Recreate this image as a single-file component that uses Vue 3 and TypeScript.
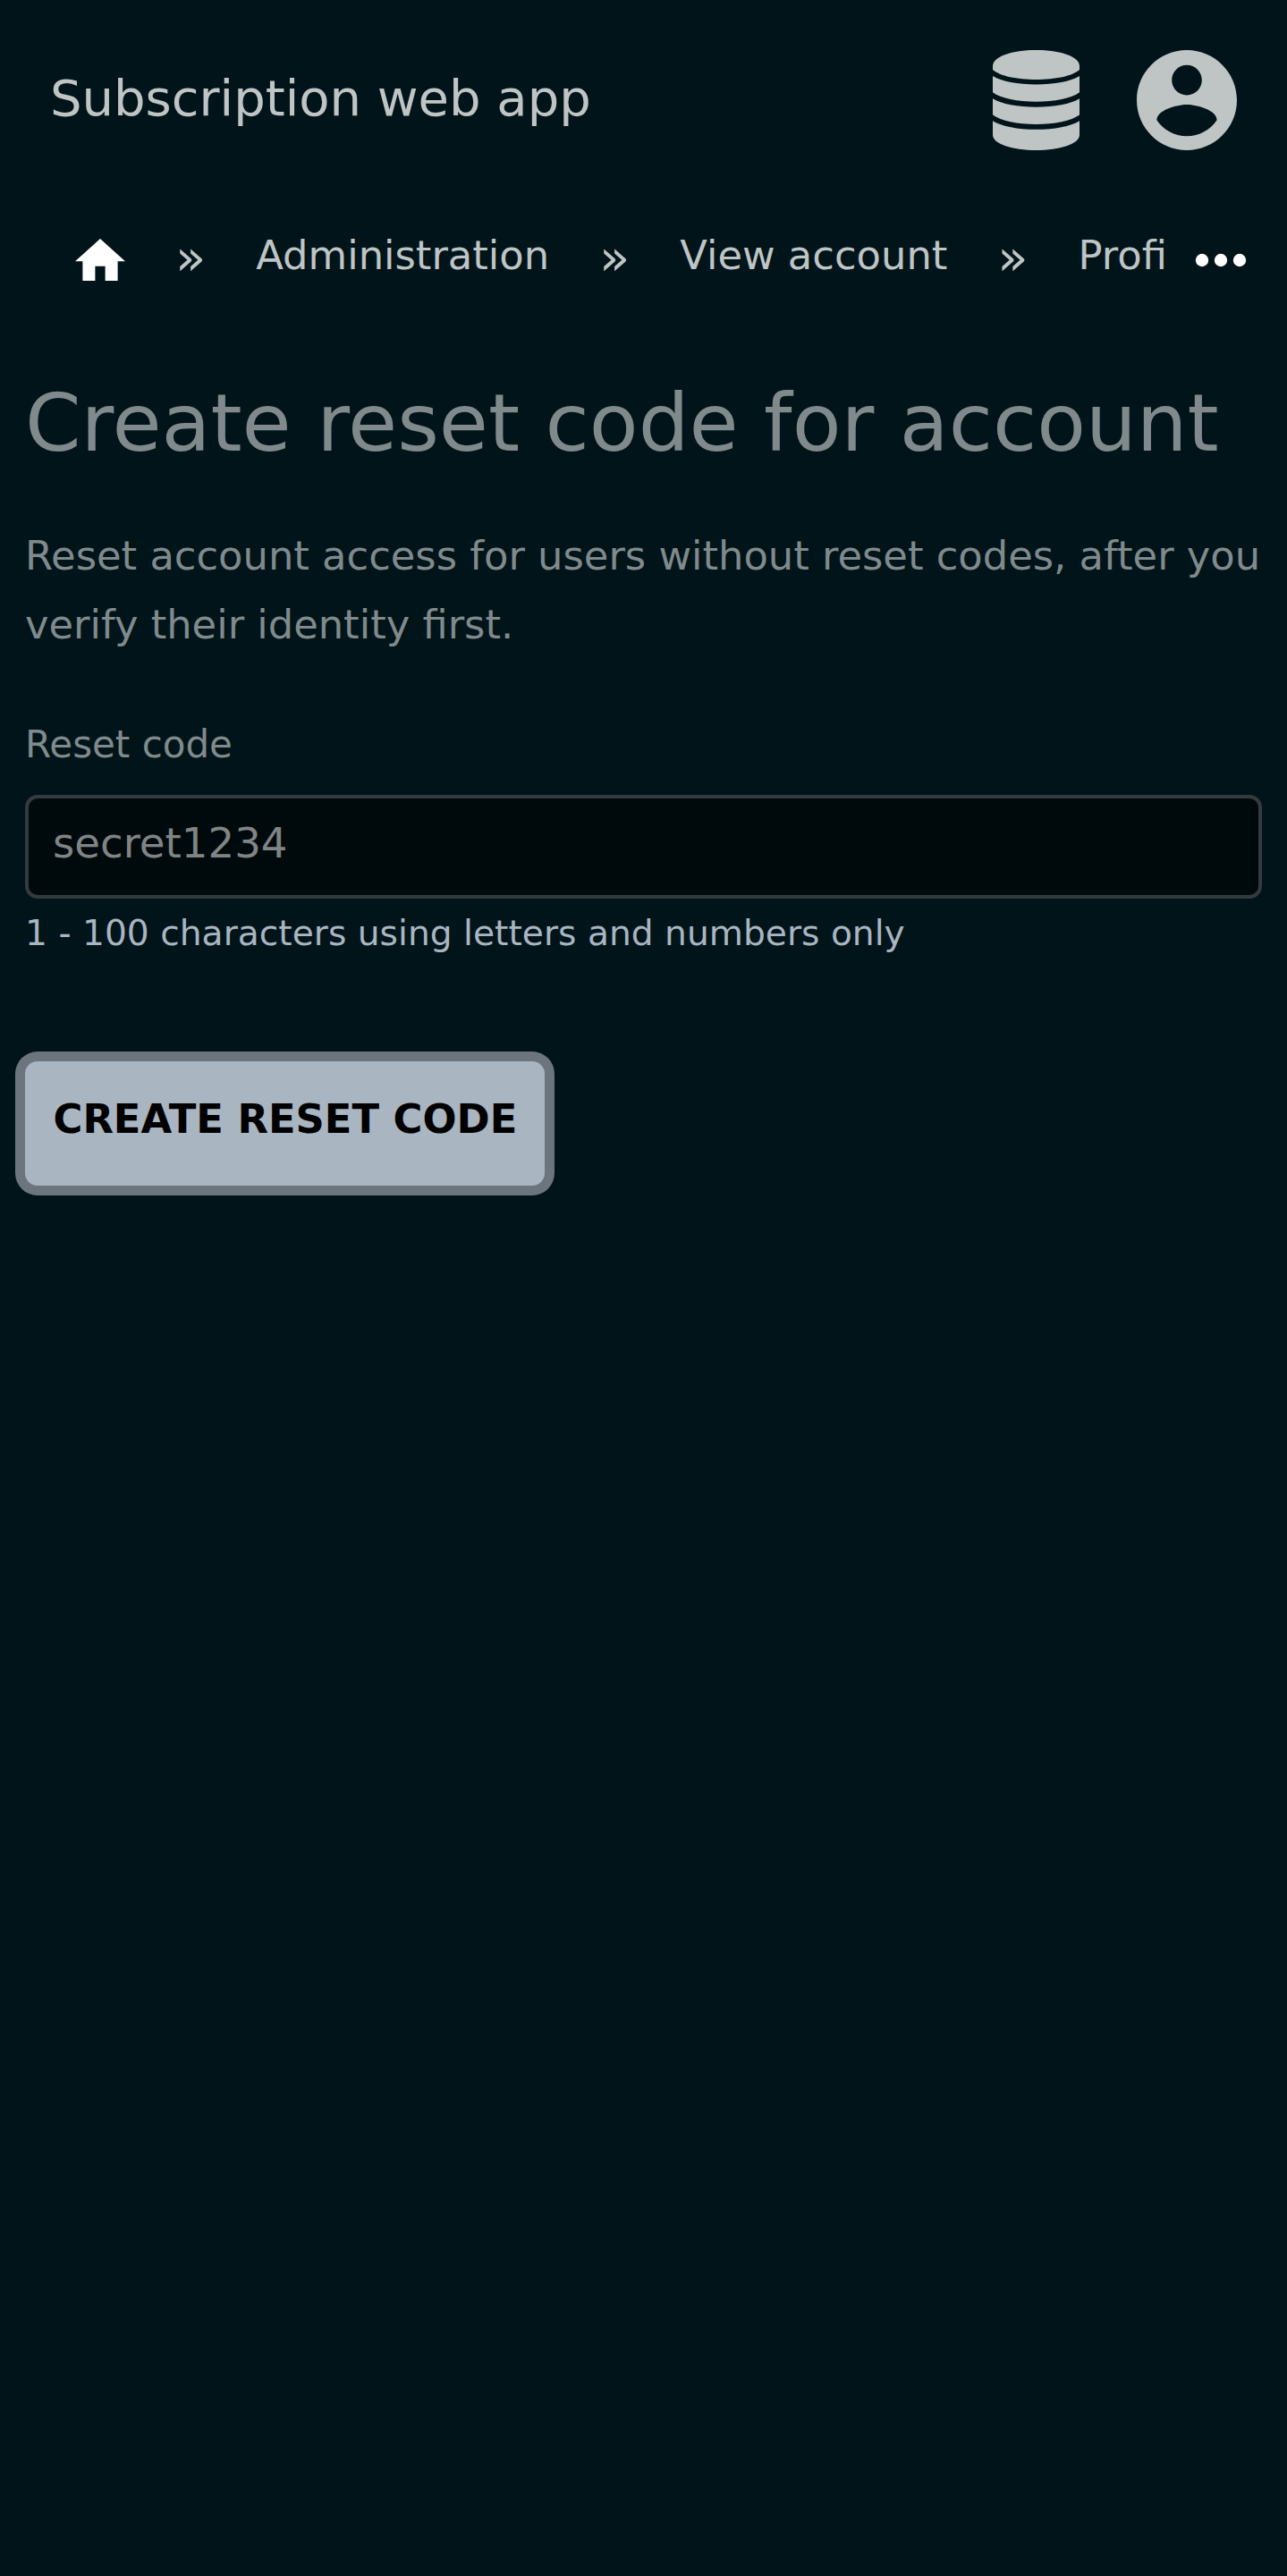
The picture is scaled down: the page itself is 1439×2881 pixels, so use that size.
<script setup lang="ts">
import { ref } from 'vue'

const crumbs: string[] = ['Administration', 'View account', 'Profile']
const code = ref<string>('')
</script>

<template>
  <div class="page">
    <header class="top">
      <a class="brand">Subscription web app</a>
      <nav class="actions">
        <svg class="database" viewBox="0 0 97 112" aria-label="Data">
          <path d="M0 18C0 7 22 0 48.5 0S97 7 97 18V22C89 29 70 33 48.5 33S8 29 0 22Z" />
          <path d="M0 29C10 35 28 38.5 48.5 38.5S87 35 97 29V47.3C88 54 69 57.8 48.5 57.8S9 54 0 47.3Z" />
          <path d="M0 54.2C10 60.2 28 63.7 48.5 63.7S87 60.2 97 54.2V72.4C88 79 69 82.9 48.5 82.9S9 79 0 72.4Z" />
          <path d="M0 79.2C10 85.2 28 88.8 48.5 88.8S87 85.2 97 79.2V95C97 105 75 112 48.5 112S0 105 0 95Z" />
        </svg>
        <svg class="account" viewBox="2 2 20 20" aria-label="Account">
          <path d="M12 2C6.48 2 2 6.48 2 12s4.48 10 10 10 10-4.48 10-10S17.52 2 12 2zm0 3c1.66 0 3 1.34 3 3s-1.34 3-3 3-3-1.34-3-3 1.34-3 3-3zm0 14.2c-2.5 0-4.71-1.28-6-3.22.03-1.99 4-3.08 6-3.08 1.99 0 5.97 1.09 6 3.08-1.29 1.94-3.5 3.22-6 3.22z" />
        </svg>
      </nav>
    </header>

    <nav class="trail">
      <div class="crumbs">
        <svg class="home" viewBox="2 3 20 17" aria-label="Home">
          <path d="M10 20v-6h4v6h5v-8h3L12 3 2 12h3v8z" />
        </svg>
        <template v-for="crumb in crumbs" :key="crumb">
          <span class="sep">»</span>
          <a class="crumb">{{ crumb }}</a>
        </template>
      </div>
      <svg class="more" viewBox="0 0 24 24" aria-label="More">
        <circle cx="6" cy="12" r="2.05" />
        <circle cx="12" cy="12" r="2.05" />
        <circle cx="18" cy="12" r="2.05" />
      </svg>
    </nav>

    <main>
      <h1>Create reset code for account</h1>
      <p class="intro">Reset account access for users without reset codes, after you verify their identity first.</p>
      <form @submit.prevent>
        <label for="code">Reset code</label>
        <input id="code" v-model="code" type="text" placeholder="secret1234" />
        <p class="hint">1 - 100 characters using letters and numbers only</p>
        <button type="submit">CREATE RESET CODE</button>
      </form>
    </main>
  </div>
</template>

<style>
body {
  margin: 0;
  background: #001419;
}
</style>

<style scoped>
.page {
  box-sizing: border-box;
  width: 1439px;
  min-height: 2881px;
  overflow: hidden;
  background: #001419;
  color: #808a8c;
  font-family: "DejaVu Sans", sans-serif;
}

.top {
  display: flex;
  align-items: center;
  justify-content: space-between;
  box-sizing: border-box;
  height: 224px;
  padding: 0 56.5px 0 56px;
  color: #bfc4c5;
}

.brand {
  font-size: 56px;
  line-height: 66px;
  padding-bottom: 4px;
}

.actions {
  display: flex;
  gap: 64px;
}

.actions svg {
  display: block;
  height: 112px;
  fill: currentColor;
}

.database {
  width: 97px;
}

.account {
  width: 112px;
}

.trail {
  display: flex;
  align-items: center;
  height: 133px;
  color: #bfc4c5;
}

.crumbs {
  display: flex;
  align-items: center;
  box-sizing: border-box;
  width: 1308px;
  height: 133px;
  padding-left: 84px;
  overflow: hidden;
  white-space: nowrap;
}

.home {
  flex: none;
  width: 56px;
  height: 47.6px;
  fill: #fff;
}

.sep {
  flex: none;
  margin: 0 56px;
  font-size: 56px;
  line-height: 66px;
  padding-bottom: 5px;
}

.crumb {
  flex: none;
  font-size: 44.8px;
  line-height: 77px;
  padding-bottom: 11px;
}

.more {
  flex: none;
  width: 84px;
  height: 84px;
  margin-left: 15px;
  fill: #fff;
}

main {
  padding: 64px 28px 0;
}

h1 {
  margin: 0;
  font-size: 89.6px;
  font-weight: 400;
  line-height: 104px;
  white-space: nowrap;
}

.intro {
  margin: 58px -10px 0 0;
  font-size: 44.8px;
  line-height: 77px;
}

form {
  display: flex;
  flex-direction: column;
  align-items: flex-start;
  margin-top: 61px;
}

label {
  font-size: 42px;
  line-height: 70px;
}

input {
  box-sizing: border-box;
  width: 1382.5px;
  height: 116px;
  margin: 21px 0 0;
  padding: 0 27px 8px;
  border: 4px solid #343a40;
  border-radius: 14px;
  outline: 0;
  background: #000a0c;
  color: #bfc4c5;
  font-family: inherit;
  font-size: 46.667px;
}

input::placeholder {
  color: #808485;
  opacity: 1;
}

.hint {
  margin: 4.5px 0 0;
  color: #a9b5c1;
  font-size: 39.2px;
  line-height: 67px;
}

button {
  box-sizing: border-box;
  height: 139px;
  margin: 110.5px 0 0;
  padding: 0 30.5px 11px 31.5px;
  border: 0;
  border-radius: 14px;
  background: #a9b5c1;
  box-shadow: 0 0 0 11px #6c757d;
  color: #000;
  font-family: inherit;
  font-size: 44.8px;
  font-weight: 700;
}
</style>
